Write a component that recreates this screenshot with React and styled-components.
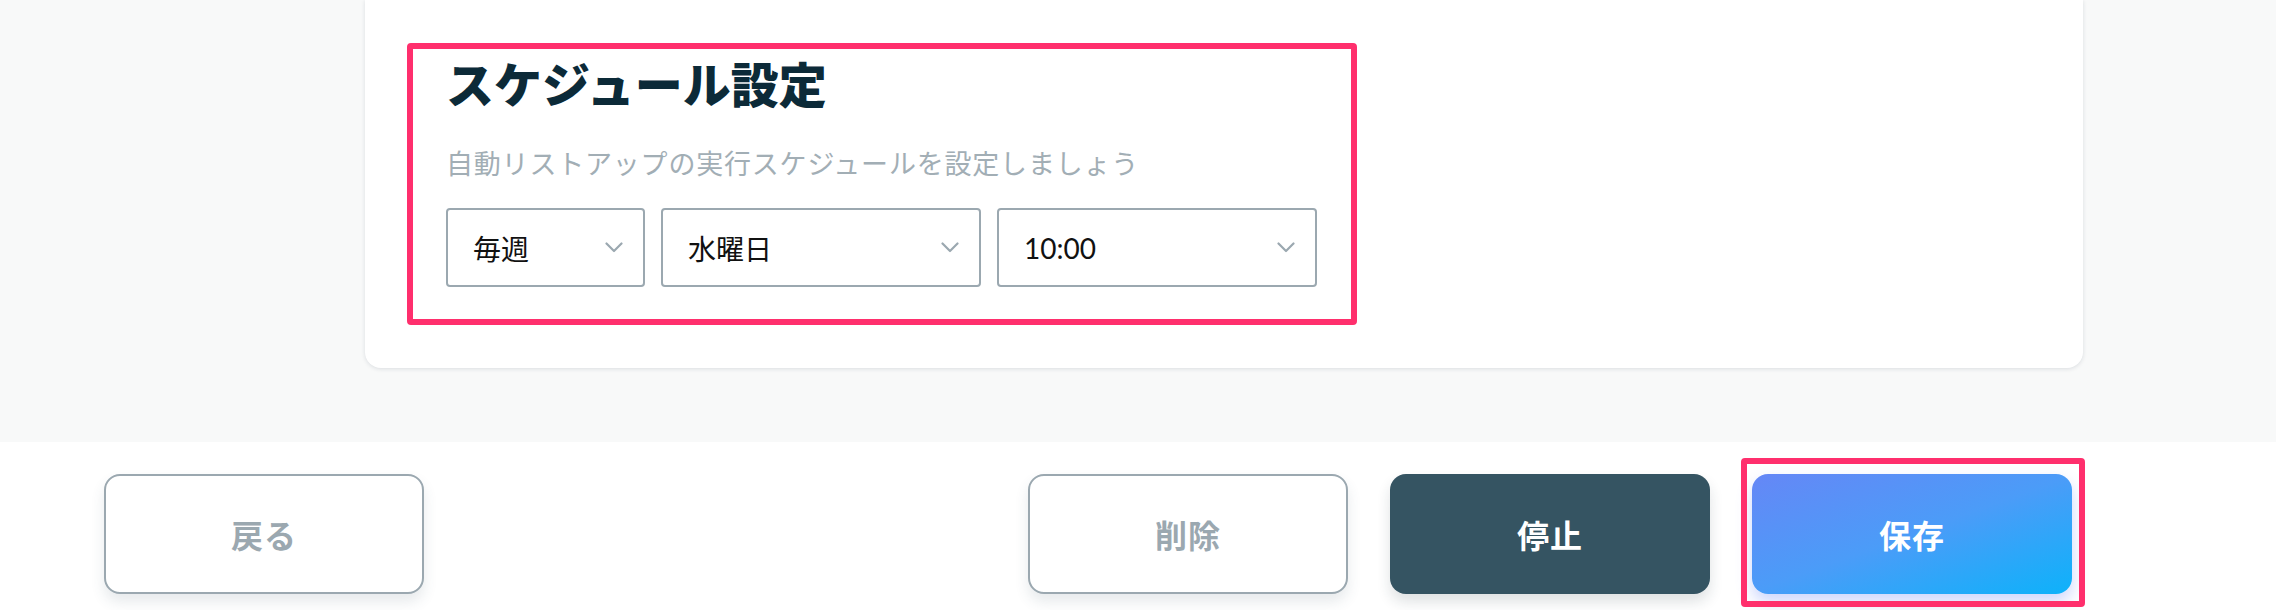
import React from 'react';
import styled, { createGlobalStyle, css } from 'styled-components';

const GlobalStyle = createGlobalStyle`
  html, body {
    margin: 0;
    padding: 0;
    background: #f8f9f9;
  }
  body {
    font-family: Lato, "Noto Sans CJK JP", "Noto Sans", sans-serif;
    -webkit-font-smoothing: antialiased;
  }
`;

const Page = styled.div`
  display: flex;
  flex-direction: column;
  min-height: 610px;
  overflow: hidden;
`;

const Main = styled.main`
  background: #f8f9f9;
  padding: 0 193px 74px 365px;
`;

const Card = styled.section`
  background: #ffffff;
  border-radius: 0 0 16px 16px;
  box-shadow: 0 1px 4px rgba(20, 40, 60, 0.13);
  padding: 49px 81px 81px;
`;

// pink marker drawn around a highlighted block
const highlight = css`
  position: relative;
  &::after {
    content: '';
    position: absolute;
    inset: ${(p) => p.$inset};
    border: 6px solid #ff2f6d;
    border-radius: 4px;
    pointer-events: none;
  }
`;

const Schedule = styled.div`
  ${highlight}
  width: 871px;
`;

const Title = styled.h2`
  margin: 0;
  font-size: 48px;
  line-height: 66px;
  font-weight: 900;
  color: #0c2a38;
  font-family: "Noto Sans CJK JP", sans-serif;
`;

const Lead = styled.p`
  margin: 28px 0 0;
  font-size: 27px;
  line-height: 40px;
  letter-spacing: 0.8px;
  color: #a2aeb5;
  font-family: "Noto Sans CJK JP", sans-serif;
`;

const SelectRow = styled.div`
  display: flex;
  gap: 16px;
  margin-top: 25px;
`;

const SelectBox = styled.div`
  box-sizing: border-box;
  display: flex;
  align-items: center;
  justify-content: space-between;
  height: 79px;
  padding: 0 20px 0 25px;
  border: 2px solid #9ba8b0;
  border-radius: 4px;
  background: #fff;
  font-size: 28px;
  color: #111;
  ${(p) => (p.$width ? `width: ${p.$width}px; flex: none;` : 'flex: 1;')}
`;

const Chevron = () => (
  <svg width="18" height="11" viewBox="0 0 18 11" fill="none">
    <polyline points="1.5,1.5 9,9 16.5,1.5" stroke="#9ba8b0" strokeWidth="2.2" strokeLinecap="round" strokeLinejoin="round" />
  </svg>
);

const Footer = styled.footer`
  flex: 1;
  background: #ffffff;
  display: flex;
  justify-content: space-between;
  align-items: flex-start;
  padding: 32px 204px 16px 104px;
`;

const Actions = styled.div`
  display: flex;
  gap: 42px;
`;

const Button = styled.button`
  box-sizing: border-box;
  width: 320px;
  height: 120px;
  border-radius: 16px;
  font-family: "Noto Sans CJK JP", sans-serif;
  font-size: 32px;
  font-weight: 700;
  letter-spacing: 1px;
  cursor: pointer;
  ${(p) =>
    p.$variant === 'outline' &&
    css`
      background: #fff;
      color: #9ba8b0;
      border: 2px solid #9ba8b0;
      box-shadow: 0 8px 14px rgba(60, 80, 100, 0.12);
    `}
  ${(p) =>
    p.$variant === 'dark' &&
    css`
      background: #355462;
      color: #fff;
      border: none;
      box-shadow: 0 8px 14px rgba(30, 50, 60, 0.14);
    `}
  ${(p) =>
    p.$variant === 'primary' &&
    css`
      background: linear-gradient(160deg, #6587f6 0%, #4b9cf8 50%, #0db2fa 100%);
      color: #fff;
      border: none;
      box-shadow: 0 8px 16px rgba(90, 120, 245, 0.3);
    `}
`;

const SaveWrap = styled.div`
  ${highlight}
  display: flex;
`;

export default function App() {
  return (
    <Page>
      <GlobalStyle />
      <Main>
        <Card>
          <Schedule $inset="-6px -40px -38px -39px">
            <Title>スケジュール設定</Title>
            <Lead>自動リストアップの実行スケジュールを設定しましょう</Lead>
            <SelectRow>
              <SelectBox $width={199}>
                <span>毎週</span>
                <Chevron />
              </SelectBox>
              <SelectBox>
                <span>水曜日</span>
                <Chevron />
              </SelectBox>
              <SelectBox>
                <span>10:00</span>
                <Chevron />
              </SelectBox>
            </SelectRow>
          </Schedule>
        </Card>
      </Main>
      <Footer>
        <Button $variant="outline">戻る</Button>
        <Actions>
          <Button $variant="outline">削除</Button>
          <Button $variant="dark">停止</Button>
          <SaveWrap $inset="-16px -13px -13px -11px">
            <Button $variant="primary">保存</Button>
          </SaveWrap>
        </Actions>
      </Footer>
    </Page>
  );
}
